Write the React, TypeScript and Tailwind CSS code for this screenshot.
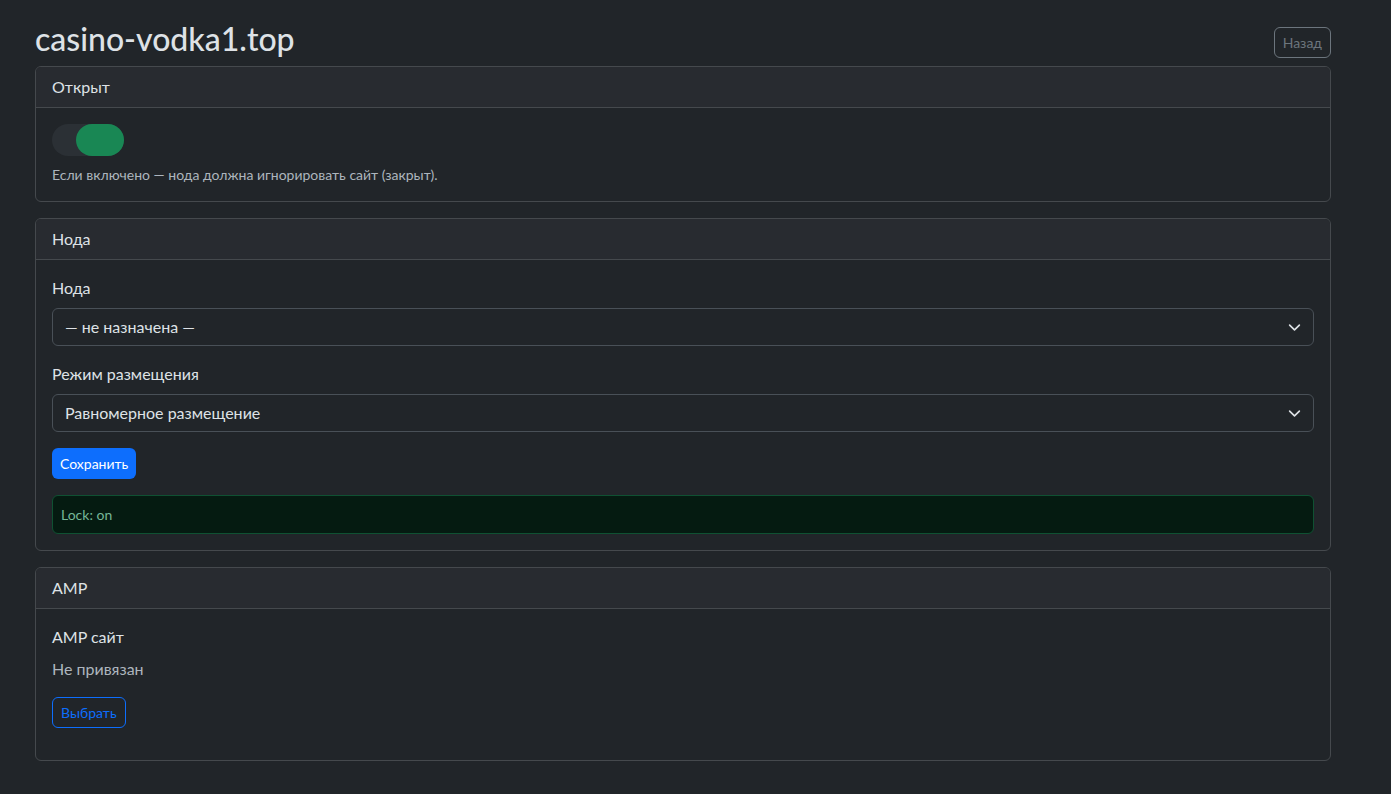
import React from "react";

const Card = ({ title, children }: { title: string; children: React.ReactNode }) => (
  <div className="mb-4 rounded-[6px] border border-[#45494d]">
    <div className="rounded-t-[5px] border-b border-[#45494d] bg-[#282b30] px-4 py-2 leading-6">{title}</div>
    <div className="p-4">{children}</div>
  </div>
);

const Select = ({ value }: { value: string }) => (
  <div className="flex h-[38px] items-center justify-between rounded-[6px] border border-[#495057] bg-[#212529] pr-3 pl-3">
    <span>{value}</span>
    <svg width="13" height="13" viewBox="0 0 16 16" fill="none">
      <path d="m2 5 6 6 6-6" stroke="#dee2e6" strokeWidth="2" strokeLinecap="round" strokeLinejoin="round" />
    </svg>
  </div>
);

export default function App() {
  return (
    <div
      className="min-h-screen bg-[#212529] text-[16px] leading-6 text-[#dee2e6]"
      style={{ fontFamily: '"Segoe UI", Lato, sans-serif' }}
    >
      <div className="ml-[35px] w-[1296px] pt-5 pb-8">
        <div className="mb-2 flex items-end justify-between">
          <h2 className="text-[32px] leading-[38px] font-medium">casino-vodka1.top</h2>
          <button className="h-[31px] rounded-[6px] border border-[#6c757d] px-2 text-[14px] text-[#6c757d]">Назад</button>
        </div>

        <Card title="Открыт">
          <div className="relative h-8 w-[72px] rounded-full bg-[#2b3035]">
            <div className="absolute top-0 right-0 h-8 w-12 rounded-full bg-[#198754]" />
          </div>
          <p className="mt-2 text-[14px] leading-[21px] text-[#adb5bd]">
            Если включено — нода должна игнорировать сайт (закрыт).
          </p>
        </Card>

        <Card title="Нода">
          <label className="mb-2 block">Нода</label>
          <Select value="— не назначена —" />
          <label className="mt-4 mb-2 block">Режим размещения</label>
          <Select value="Равномерное размещение" />
          <button className="mt-4 h-[31px] rounded-[6px] bg-[#0d6efd] px-2 text-[14px] text-white">Сохранить</button>
          <div className="mt-4 rounded-[6px] border border-[#0f5132] bg-[#051b11] px-2 py-2 text-[14px] leading-[21px] text-[#75b798]">
            Lock: on
          </div>
        </Card>

        <Card title="AMP">
          <div className="mb-2">AMP сайт</div>
          <div className="mb-4 text-[#adb5bd]">Не привязан</div>
          <button className="mb-4 h-[31px] rounded-[6px] border border-[#0d6efd] px-2 text-[14px] text-[#0d6efd]">Выбрать</button>
        </Card>
      </div>
    </div>
  );
}
